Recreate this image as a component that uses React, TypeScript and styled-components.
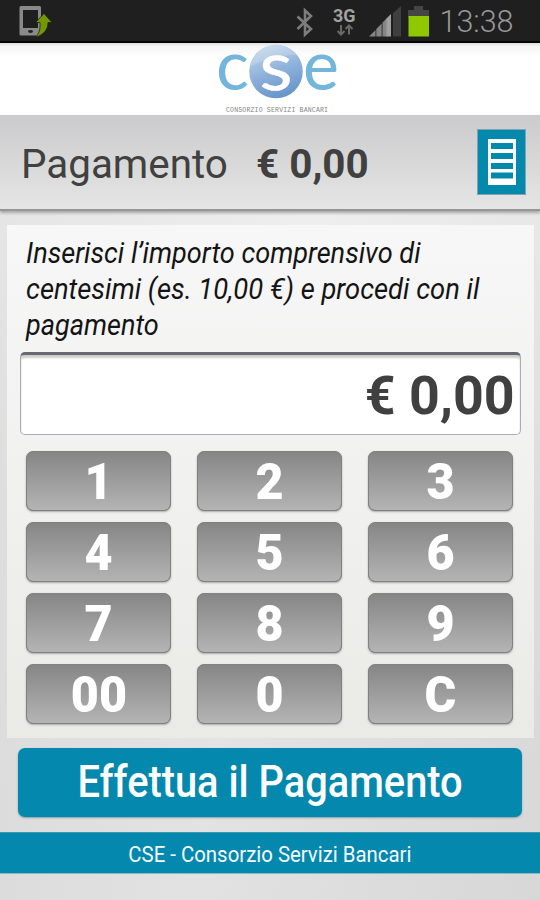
import React from 'react';
import styled, { createGlobalStyle } from 'styled-components';

const GlobalStyle = createGlobalStyle`
  * { box-sizing: border-box; }
  body { margin: 0; font-family: Roboto, sans-serif; background: #e0e0e0; }
  button { font-family: inherit; border: 0; padding: 0; margin: 0; }
`;

const Screen = styled.div`
  width: 540px;
  height: 900px;
  overflow: hidden;
  display: flex;
  flex-direction: column;
  background: linear-gradient(100deg, rgba(0,0,0,0.03), rgba(255,255,255,0.12) 50%, rgba(0,0,0,0.03)),
    linear-gradient(#ececec 210px, #e2e2e2 500px, #dedede);
`;

const StatusBar = styled.header`
  flex: none;
  height: 43px;
  display: flex;
  justify-content: space-between;
  background: #1f1f1f;
  border-bottom: 2px solid #050505;
`;

const LogoBar = styled.div`
  flex: none;
  height: 72px;
  display: flex;
  justify-content: center;
  padding-left: 14px;
  background: linear-gradient(#dcdcdc, #f4f4f4 3px, #fff 14px);
`;

const TitleBar = styled.div`
  flex: none;
  height: 96px;
  display: flex;
  align-items: center;
  padding: 0 14px 0 21px;
  background: linear-gradient(#cbcbcd, #e5e5e5);
  border-bottom: 2px solid #969696;
  box-shadow: 0 2px 3px #a5a5a5;
`;

const Fit = styled.span<{ $scale: number; $origin?: string }>`
  display: inline-block;
  white-space: nowrap;
  transform: scaleX(${p => p.$scale});
  transform-origin: ${p => p.$origin ?? 'left'};
`;

const Title = styled.h1`
  margin: 0;
  padding-top: 4px;
  width: 235px;
  font-size: 41px;
  font-weight: 400;
  line-height: 48px;
  color: #404040;
`;

const TitleAmount = styled.div`
  flex: 1;
  padding-top: 4px;
  font-size: 41px;
  font-weight: 700;
  line-height: 48px;
  color: #404040;
`;

const MenuButton = styled.button`
  width: 49px;
  height: 66px;
  display: grid;
  place-items: center;
  background: #0488ac;
  border: 1px solid #7ba4b4;
`;

const Panel = styled.main`
  flex: none;
  width: 527px;
  height: 513px;
  margin: 14px 0 0 7px;
  padding: 10px 13px 0;
  background: linear-gradient(#f7f7f7, #f1f1f0 50%, #eaeae6);
`;

const Instructions = styled.p`
  margin: 0;
  height: 117px;
  padding-left: 6px;
  display: flex;
  flex-direction: column;
  align-items: flex-start;
  font-size: 30px;
  font-style: italic;
  line-height: 36px;
  color: #141414;
`;

const AmountField = styled.div`
  height: 83px;
  width: 501px;
  padding: 2px 5px 0 0;
  display: flex;
  align-items: center;
  justify-content: flex-end;
  font-size: 54px;
  font-weight: 700;
  color: #404040;
  background: #fff;
  border: 1px solid #a9abb9;
  border-top: 3px solid #666973;
  border-radius: 5px;
  box-shadow: inset 0 3px 2px #cfcfca;
`;

const Keypad = styled.div`
  display: grid;
  grid-template-columns: repeat(3, 145px);
  grid-auto-rows: 60px;
  gap: 11px 26px;
  padding: 16px 0 0 6px;
`;

const Key = styled.button`
  display: flex;
  align-items: center;
  justify-content: center;
  padding-top: 2px;
  font-size: 50px;
  font-weight: 900;
  line-height: 58px;
  color: #fff;
  background: linear-gradient(#868686, #b4b4b4) padding-box, #81817f;
  border: 1.5px solid #81817f;
  border-radius: 7px;
  box-shadow: 0 1px 2px #aaa;
`;

const PayButton = styled.button`
  flex: none;
  width: 504px;
  height: 69px;
  margin: 10px 0 0 18px;
  font-size: 44px;
  font-weight: 500;
  line-height: 64px;
  padding-bottom: 2px;
  color: #fff;
  background: #0488ad;
  border-radius: 7px;
  box-shadow: 0 1px 2px #8a9fa6;
`;

const Footer = styled.footer`
  flex: none;
  height: 42px;
  margin-top: 15px;
  text-align: center;
  font-size: 22px;
  line-height: 43px;
  color: #f4fbfd;
  background: #0488ad;
  border-top: 1px solid #3a9ab6;
  border-bottom: 1px solid #8bb8c6;
`;

const LogoSvg = styled.svg`
  overflow: visible;
`;

const DeviceIcon = () => (
  <svg width="60" height="41" viewBox="0 0 60 41">
    <path fillRule="evenodd" fill="#8a8a8a" d="M21 6h18.500q1.500 0 1.500 1.500V34q0 1.500-1.500 1.500H21q-1.500 0-1.500-1.500V7.500Q19.500 6 21 6zm2 4v18h15V10z" />
    <ellipse cx="30.500" cy="31.500" rx="2.500" ry="1.400" fill="#222" />
    <path d="M44 13.500l8 9h-4c0 7-4 12-12.500 15 3.500-4 5-8 4.500-15h-4.500z" fill="#749900" stroke="#1f1f1f" strokeWidth=".8" />
  </svg>
);

const StatusIcons = () => (
  <svg width="250" height="41" viewBox="290 0 250 41" fontFamily="Roboto, sans-serif">
    <path d="M297.500 16.500L311 29l-6 5.500v-24l6 5.500-13.500 13" fill="none" stroke="#7d7d7d" strokeWidth="2.600" />
    <text x="333" y="21.500" fontSize="18.500" fontWeight="700" fill="#a2a2a2" textLength="22.500" lengthAdjust="spacingAndGlyphs">3G</text>
    <g fill="none" stroke="#696969" strokeWidth="2">
      <path d="M341 25v9M337.500 31l3.500 3.500 3.500-3.500M349 34.500v-9M345.500 29l3.500-3.500 3.500 3.500" />
    </g>
    <g fill="#858585">
      <path d="M369 36.500l6.500-6.500v6.500zM376.300 29l5.400-5.500v13h-5.400zM382.500 22.500l4.500-4.500v18.500h-4.500z" />
      <path d="M386.500 18.500l4.500-4.500v22.500h-4.500z" fill="#a0a0a0" />
      <path d="M393 13l8-7v30.500h-8z" fill="#3f3f3f" />
    </g>
    <path d="M408 10h6V6h9v4h6v7h-21z" fill="#454545" />
    <path d="M408.500 16H429v20.500h-20.500z" fill="#8fc800" />
    <text x="439.500" y="32" fontSize="31" fontWeight="300" fill="#989898" textLength="74" lengthAdjust="spacingAndGlyphs">13:38</text>
  </svg>
);

const CseLogo = () => (
  <LogoSvg width="130" height="72" viewBox="212 43 130 72">
    <defs>
      <linearGradient id="ball" x1="0.300" y1="0" x2="0.650" y2="1">
        <stop offset="0" stopColor="#c3d5ea" />
        <stop offset="0.500" stopColor="#8eb1da" />
        <stop offset="1" stopColor="#6493c9" />
      </linearGradient>
    </defs>
    <circle cx="276" cy="71.500" r="26.800" fill="url(#ball)" />
    <path d="M250 66a27 27 0 0 1 47-11Q278 54 250 66z" fill="#fff" opacity=".18" />
    <g fontFamily="Lato, sans-serif">
      <text x="216" y="89.500" fontSize="69" fill="#72b6db" textLength="33" lengthAdjust="spacingAndGlyphs">c</text>
      <text x="259.500" y="89.500" fontSize="68" fill="#fff" stroke="#fff" strokeWidth=".5" textLength="33" lengthAdjust="spacingAndGlyphs">s</text>
      <text x="303" y="89.500" fontSize="69" fill="#72b6db" textLength="36" lengthAdjust="spacingAndGlyphs">e</text>
    </g>
    <text x="226" y="112" fontSize="6.500" fontFamily="Liberation Mono, monospace" fill="#858585" textLength="102">CONSORZIO SERVIZI BANCARI</text>
  </LogoSvg>
);

const ListIcon = () => (
  <svg width="30" height="48" viewBox="0 0 30 48">
    <path fill="#fff" fillRule="evenodd" d="M1 1h28v46H1zM4 5v6h22V5zM4 15v6h22v-6zM4 25v6h22v-6zM4 34.500v6h22v-6z" />
  </svg>
);

const keys = ['1', '2', '3', '4', '5', '6', '7', '8', '9', '00', '0', 'C'];

export default function App() {
  return (
    <>
      <GlobalStyle />
      <Screen>
        <StatusBar>
          <DeviceIcon />
          <StatusIcons />
        </StatusBar>
        <LogoBar>
          <CseLogo />
        </LogoBar>
        <TitleBar>
          <Title><Fit $scale={0.985}>Pagamento</Fit></Title>
          <TitleAmount><Fit $scale={0.985}>€ 0,00</Fit></TitleAmount>
          <MenuButton aria-label="Menu"><ListIcon /></MenuButton>
        </TitleBar>
        <Panel>
          <Instructions>
            <Fit $scale={0.904}>Inserisci l’importo comprensivo di</Fit>
            <Fit $scale={0.911}>centesimi (es. 10,00 €) e procedi con il</Fit>
            <Fit $scale={0.902}>pagamento</Fit>
          </Instructions>
          <AmountField><Fit $scale={0.995} $origin="right">€ 0,00</Fit></AmountField>
          <Keypad>
            {keys.map(k => <Key key={k}><Fit $scale={0.97} $origin="center">{k}</Fit></Key>)}
          </Keypad>
        </Panel>
        <PayButton><Fit $scale={0.904} $origin="center">Effettua il Pagamento</Fit></PayButton>
        <Footer><Fit $scale={0.926} $origin="center">CSE - Consorzio Servizi Bancari</Fit></Footer>
      </Screen>
    </>
  );
}
